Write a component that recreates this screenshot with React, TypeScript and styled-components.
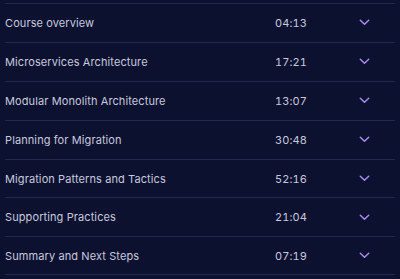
import styled, { createGlobalStyle } from "styled-components";

const GlobalStyle = createGlobalStyle`
	html, body {
		margin: 0;
		padding: 0;
		background: #0d1130;
	}
	body {
		font-family: Inter, "Noto Sans", sans-serif;
	}
`;

const List = styled.ul`
	list-style: none;
	margin: 0;
	padding: 3px 5px 4px 5px;
	background: #0d1130;
	width: 400px;
	height: 279px;
	box-sizing: border-box;
`;

const Row = styled.li`
	display: grid;
	grid-template-columns: 270px 80px 18px;
	align-items: center;
	height: 38.9px;
	box-sizing: border-box;
	border-top: 1px solid #23284a;
	&:last-child {
		border-bottom: 1px solid #23284a;
	}
	color: #c6c9de;
	font-size: 11px;
	letter-spacing: 0.1px;
`;

const Title = styled.span`
	white-space: nowrap;
`;

const Time = styled.span`
	font-variant-numeric: tabular-nums;
`;

const Toggle = styled.span`
	display: flex;
	justify-content: center;
	align-items: center;
	color: #a98bf0;
`;

const lessons = [
	{ title: "Course overview", time: "04:13" },
	{ title: "Microservices Architecture", time: "17:21" },
	{ title: "Modular Monolith Architecture", time: "13:07" },
	{ title: "Planning for Migration", time: "30:48" },
	{ title: "Migration Patterns and Tactics", time: "52:16" },
	{ title: "Supporting Practices", time: "21:04" },
	{ title: "Summary and Next Steps", time: "07:19" },
];

function Chevron() {
	return (
		<svg width="11" height="7" viewBox="0 0 11 7" fill="none">
			<path d="M1.3 1.3 L5.5 5.3 L9.7 1.3" stroke="currentColor" strokeWidth="1.5" strokeLinecap="round" strokeLinejoin="round" />
		</svg>
	);
}

function App() {
	return (
		<>
			<GlobalStyle />
			<List>
				{lessons.map((l) => (
					<Row key={l.title}>
						<Title>{l.title}</Title>
						<Time>{l.time}</Time>
						<Toggle>
							<Chevron />
						</Toggle>
					</Row>
				))}
			</List>
		</>
	);
}

export default App;
